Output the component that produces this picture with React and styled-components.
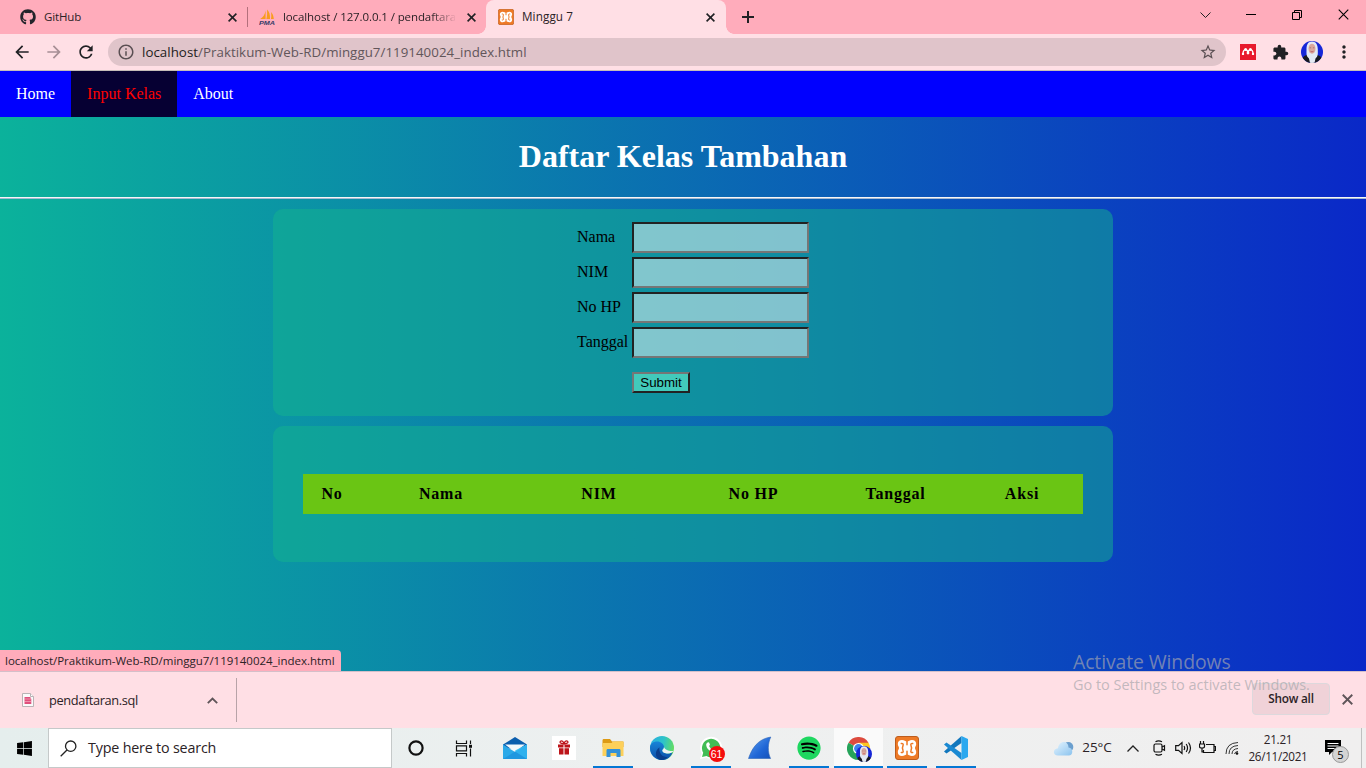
import React from "react";
import styled, { createGlobalStyle, css } from "styled-components";
import { FaGithub, FaWindows, FaSpotify } from "react-icons/fa";
import { MdArrowBack, MdArrowForward, MdRefresh, MdInfoOutline, MdStarBorder, MdExtension, MdMoreVert } from "react-icons/md";

const Global = createGlobalStyle`
  *, *::before, *::after { box-sizing: border-box; }
  html, body { margin: 0; padding: 0; overflow: hidden; }
  svg { display: block; flex: none; }
`;

const uiFont = `"Open Sans", "Noto Sans", sans-serif`;
const serif = `"Liberation Serif", "Times New Roman", serif`;

const Screen = styled.div`
  position: relative;
  width: 1366px;
  height: 768px;
  display: flex;
  flex-direction: column;
  overflow: hidden;
  font-family: ${uiFont};
`;

const UiText = styled.span`
  font-size: ${(p) => p.$size || 12}px;
  letter-spacing: ${(p) => p.$track || 0}px;
  color: ${(p) => p.$color || "#2b2226"};
  white-space: nowrap;
  line-height: 1.3;
`;

/* ---- browser chrome ---- */
const TabStrip = styled.div`
  flex: none;
  height: 34px;
  display: flex;
  background: #ffacbb;
`;

const Tab = styled.div`
  position: relative;
  width: ${(p) => p.$width}px;
  height: 34px;
  padding: 0 ${(p) => p.$right}px 0 ${(p) => p.$left}px;
  display: flex;
  align-items: center;
  gap: 8px;
  ${(p) =>
    p.$active &&
    css`
      background: #ffdfe5;
      border-radius: 8px 8px 0 0;
      &::before,
      &::after {
        content: "";
        position: absolute;
        bottom: 0;
        width: 8px;
        height: 8px;
      }
      &::before {
        left: -8px;
        background: radial-gradient(circle at 0 0, transparent 7.5px, #ffdfe5 8px);
      }
      &::after {
        right: -8px;
        background: radial-gradient(circle at 100% 0, transparent 7.5px, #ffdfe5 8px);
      }
    `}
`;

const TabTitle = styled(UiText)`
  flex: 1;
  min-width: 0;
  ${(p) => p.$fade && css`
    mask-image: linear-gradient(to right, #000 calc(100% - 24px), transparent calc(100% + 2px));
  `}
`;

const TabDivider = styled.div`
  width: 1px;
  height: 20px;
  margin-top: 7px;
  background: #b3707c;
`;

const NewTab = styled.div`
  height: 34px;
  padding-left: 14px;
  display: flex;
  align-items: center;
`;

const WindowControls = styled.div`
  margin-left: auto;
  display: flex;
  height: 29px;
`;

const WindowButton = styled.div`
  width: 46px;
  display: flex;
  align-items: center;
  justify-content: center;
`;

const Toolbar = styled.div`
  flex: none;
  height: 37px;
  display: flex;
  align-items: center;
  background: #ffdfe5;
  border-bottom: 1px solid #c5bcb9;
`;

const ToolButton = styled.div`
  width: 32px;
  height: 32px;
  display: flex;
  align-items: center;
  justify-content: center;
  color: ${(p) => p.$color || "#202124"};
`;

const NavButtons = styled.div`
  width: 108px;
  padding-left: 6px;
  display: flex;
`;

const Omnibox = styled.div`
  width: 1118px;
  height: 28px;
  padding: 0 9px 0 9px;
  display: flex;
  align-items: center;
  border-radius: 14px;
  background: #e0c4ca;
  color: #5a4f53;
`;

const Url = styled(UiText)`
  flex: 1;
  margin-left: 7px;
  padding-top: 1px;
  b {
    font-weight: 400;
    color: #231d20;
  }
`;

const Extensions = styled.div`
  display: flex;
  margin-left: 6px;
`;

/* ---- web page ---- */
const Page = styled.main`
  position: relative;
  flex: none;
  height: 600px;
  font-family: ${serif};
  font-size: 16px;
  color: #000;
  background: linear-gradient(to right, #0bb29b, #0a28c8);
`;

const Nav = styled.nav`
  height: 46px;
  display: flex;
  background: #0000ff;
`;

const NavLink = styled.a`
  height: 46px;
  padding: 0 16px;
  line-height: 46px;
  color: ${(p) => (p.$hover ? "#f00" : "#fff")};
  background: ${(p) => (p.$hover ? "#060033" : "transparent")};
`;

const Heading = styled.h1`
  margin: 0;
  height: 80px;
  line-height: 79px;
  text-align: center;
  font-size: 32px;
  color: #fff;
`;

const Rule = styled.div`
  height: 2px;
  background: linear-gradient(#f6f6f6 50%, #a5b9d2 50%);
`;

const Card = styled.section`
  width: 840px;
  height: ${(p) => p.$height}px;
  margin: 10px 0 0 273px;
  padding: ${(p) => p.$pad};
  border-radius: 10px;
  background: rgba(20, 180, 141, 0.5);
`;

const Form = styled.div`
  display: grid;
  grid-template-columns: 53px 177px;
  column-gap: 2px;
  row-gap: 4px;
`;

const Label = styled.label`
  line-height: 29px;
`;

const Field = styled.input`
  width: 177px;
  height: 31px;
  margin: 0;
  padding: 1px 2px;
  border: 2px solid;
  border-color: #222 #767676 #767676 #222;
  background: rgba(255, 255, 255, 0.48);
  background-clip: padding-box;
`;

const Submit = styled.button`
  grid-column: 2;
  justify-self: start;
  width: 58px;
  height: 21px;
  margin-top: 10px;
  padding: 0;
  border: 2px solid;
  border-color: #767676 #222 #222 #767676;
  background: #42cabb;
  color: #000;
  font: 13.333px/16px "Liberation Sans", Arial, sans-serif;
`;

const Table = styled.table`
  width: 780px;
  table-layout: fixed;
  border-collapse: collapse;
  background: #6ac514;
`;

const HeadCell = styled.th`
  width: ${(p) => p.$width}px;
  height: 40px;
  padding: 0;
  letter-spacing: 0.8px;
  font-size: 16px;
`;

const StatusBubble = styled.div`
  position: absolute;
  left: 0;
  bottom: 0;
  width: 341px;
  height: 21px;
  padding: 2px 0 0 5px;
  display: flex;
  align-items: center;
  background: #ffacbb;
  border-radius: 0 4px 0 0;
  font-family: ${uiFont};
`;

/* ---- downloads ---- */
const Shelf = styled.div`
  flex: none;
  height: 57px;
  display: flex;
  align-items: center;
  background: #ffdfe5;
  border-top: 1px solid #d4bfc9;
`;

const Download = styled.div`
  width: 237px;
  height: 44px;
  padding: 0 18px 0 22px;
  display: flex;
  align-items: center;
  border-right: 1px solid #b8a3a8;
`;

const FileName = styled(UiText)`
  flex: 1;
  margin-left: 15px;
`;

const ShowAll = styled.div`
  width: 78px;
  height: 32px;
  margin: 0 12px 3px auto;
  display: flex;
  align-items: center;
  justify-content: center;
  border: 1px solid #ddd8dc;
  border-radius: 4px;
  background: #f0d2d8;
  font-weight: 600;
`;

const ShelfClose = styled.div`
  width: 24px;
  margin-bottom: 2px;
`;

const Watermark = styled.div`
  position: absolute;
  left: 1073px;
  top: 649px;
  display: flex;
  flex-direction: column;
  gap: 2px;
`;

/* ---- taskbar ---- */
const Taskbar = styled.footer`
  flex: none;
  height: 40px;
  display: flex;
  background: linear-gradient(to right, #e5eeed, #eef0f0 50%, #f0efef);
`;

const Start = styled.div`
  width: 48px;
  display: flex;
  align-items: center;
  justify-content: center;
`;

const Search = styled.div`
  width: 344px;
  height: 40px;
  padding-left: 11px;
  display: flex;
  align-items: center;
  gap: 11px;
  background: #fff;
  border: 1px solid #c5c9c9;
`;

const AppButton = styled.div`
  position: relative;
  width: ${(p) => p.$width || 49}px;
  height: 40px;
  display: flex;
  align-items: center;
  justify-content: center;
  background: ${(p) => (p.$active ? "#fafafa" : "transparent")};
  &::after {
    content: "";
    display: ${(p) => (p.$open ? "block" : "none")};
    position: absolute;
    bottom: 0;
    left: ${(p) => (p.$active ? 0 : 4.5)}px;
    right: ${(p) => (p.$active ? 0 : 4.5)}px;
    height: 2px;
    background: #0477d4;
  }
`;

const Apps = styled.div`
  display: flex;
  margin-left: 2.5px;
`;

const Tray = styled.div`
  margin-left: auto;
  display: flex;
  align-items: center;
`;

const TrayItem = styled.div`
  width: ${(p) => p.$width}px;
  display: flex;
  align-items: center;
  justify-content: center;
`;

const Clock = styled.div`
  width: 66px;
  display: flex;
  flex-direction: column;
  align-items: center;
  gap: 2px;
`;

const Edge = styled.div`
  width: 5px;
  height: 40px;
  border-left: 1px solid #bfc0c0;
`;

/* ---- drawings ---- */
const Cross = ({ size = 9, color = "#202124", width = 1.6 }) => (
  <svg width={size} height={size} viewBox="0 0 9 9" stroke={color} strokeWidth={width}>
    <path d="M.6.6l7.8 7.8M8.400.6L.6 8.400" />
  </svg>
);

const TabClose = styled.div`
  width: 16px;
  height: 16px;
  display: flex;
  align-items: center;
  justify-content: center;
`;

const SpotifyIcon = styled(FaSpotify)`
  color: #1ed760;
  background: radial-gradient(#000 60%, transparent 62%);
`;

const Xampp = ({ size }) => (
  <svg width={size} height={size} viewBox="0 0 24 24">
    <rect x=".5" y=".5" width="23" height="23" rx="2.500" fill="#ee7a26" stroke="#bd5c1c" />
    <path
      d="M7 4C9.500 4 10.300 5.500 12 5.500S14.500 4 17 4c2.500 0 4.200 1.600 4.200 4 0 1.800-1.200 2.700-1.200 4s1.200 2.200 1.200 4c0 2.400-1.700 4-4.200 4s-3.300-1.500-5-1.500S9.500 20 7 20c-2.500 0-4.200-1.600-4.200-4 0-1.800 1.200-2.700 1.200-4S2.800 9.800 2.800 8C2.800 5.600 4.500 4 7 4z"
      fill="#fff"
    />
    <path
      d="M12 5v3.700M12 19v-3.700M6.300 7.500c1.300-.4 2.200.4 1.800 1.600L7.400 12l.7 2.900c.4 1.200-.5 2-1.800 1.600M17.700 7.500c-1.300-.4-2.200.4-1.800 1.600l.7 2.900-.7 2.900c-.4 1.200.5 2 1.800 1.600"
      fill="none" stroke="#ee7a26" strokeWidth="1.500" strokeLinecap="round"
    />
  </svg>
);

const PmaIcon = () => (
  <svg width="16" height="16" viewBox="0 0 16 16">
    <path d="M6.600 1.500v8.500H1.200C4 8.500 6 5.500 6.600 1.500zM8 .5c2.200 2 3.200 5 3 9.500H7.400C8.200 7 8.300 4 8 .5zM12 3c1.800 1.800 2.600 4 2.800 7H12c.4-2.500.4-4.500 0-7z" fill="#f89c1c" />
    <text x="0" y="15.700" textLength="16" lengthAdjust="spacingAndGlyphs" fontFamily="Liberation Sans, sans-serif" fontWeight="700" fontStyle="italic" fontSize="6.200" fill="#353b68">PMA</text>
  </svg>
);

const Avatar = ({ size }) => (
  <svg width={size} height={size} viewBox="0 0 22 22">
    <clipPath id={`face${size}`}><circle cx="11" cy="11" r="11" /></clipPath>
    <g clipPath={`url(#face${size})`}>
      <rect width="22" height="22" fill="#1626d8" />
      <path d="M0 22c.3-5 2.500-7 5.500-8h11c3 1 5.500 3 6 8z" fill="#171821" />
      <path d="M11 .5c-4.800 0-5.500 4.500-5.500 8 0 4.500-.5 6.500 2.500 9L9 22h4.500l1-4.500c2.800-2.500 2.300-4.500 2.300-9C16.800 5 15.800.5 11 .5z" fill="#e3e8f3" />
      <ellipse cx="11" cy="7.800" rx="3.500" ry="5" fill="#dba79c" />
      <path d="M8.600 6.800h1.500M11.900 6.800h1.500" stroke="#8b626a" strokeWidth=".7" />
      <path d="M9.500 10.300q1.500 1.200 3 0" stroke="#b8515c" strokeWidth=".8" fill="none" />
    </g>
  </svg>
);

const Mendeley = () => (
  <svg width="16" height="16" viewBox="0 0 16 16">
    <rect width="16" height="16" fill="#e8192c" />
    <path d="M3 10C3 7 4 5.800 5.500 5.600 7.300 5.800 8 7 8 9.500 8 7 8.700 5.800 10.500 5.600 12 5.800 13 7 13 10" fill="none" stroke="#fff" strokeWidth="1.400" />
    <circle cx="5.600" cy="5.500" r="1.500" fill="#fff" />
    <circle cx="10.400" cy="5.500" r="1.500" fill="#fff" />
    <circle cx="3" cy="9.900" r="1.200" fill="#fff" />
    <circle cx="8" cy="9" r="1.400" fill="#fff" />
    <circle cx="13" cy="9.900" r="1.200" fill="#fff" />
  </svg>
);

const SqlFile = () => (
  <svg width="12" height="14" viewBox="0 0 12 14">
    <path d="M.5.5h8l3 3v10H.5z" fill="#fafafa" stroke="#b9b3b5" />
    <path d="M8.500.5v3h3" fill="#fff" stroke="#b9b3b5" />
    <path d="M2.500 4h6v1.300l.8.7v5h-6.800z" fill="#e0507c" />
    <path d="M2 6h7.500M2 8.500h7.500" stroke="#f6bccb" strokeWidth=".6" />
  </svg>
);

const TaskView = () => (
  <svg width="18" height="17" viewBox="0 0 18 17" fill="none" stroke="#111" strokeWidth="1.200">
    <path d="M1.500.5v3h10v-3M1.500 16.500v-3h10v3M1.500 5.800h10v5h-10zM15.500.5v3.500M15.500 8.500v8" />
    <path d="M14 4.800h3v3h-3z" fill="#111" stroke="none" />
  </svg>
);

const Mail = () => (
  <svg width="24" height="24" viewBox="0 0 24 24">
    <path d="M0 8.500L12 1l12 7.500v4H0z" fill="#0b5eae" />
    <path d="M2 8.500h20L12 16z" fill="#f4f8fb" />
    <path d="M0 8.500l12 7.500L24 8.500V23H0z" fill="#2ba9e8" />
    <path d="M12 14.500L24 8.500V23z" fill="#45c4f4" />
    <path d="M0 23L24 8.500V23z" fill="#2fb1ee" />
    <path d="M12 15.500L24 23H0z" fill="#1f97e0" />
  </svg>
);

const Gift = () => (
  <svg width="24" height="24" viewBox="0 0 24 24">
    <path fill="#fff" d="M0 0h24v24H0z" />
    <path d="M6 8.500h5.500v3H6zM12.500 8.500H18v3h-5.500zM7 12.300h4.500v6.200H7zM12.500 12.300H17v6.200h-4.500z" fill="#bd1419" />
    <path d="M12 8C9 8 7.200 6.500 8.500 5.300S11.500 5.500 12 8c.5-2.500 2.200-3.900 3.500-2.700S15 8 12 8z" fill="none" stroke="#bd1419" strokeWidth="1.300" />
  </svg>
);

const Explorer = () => (
  <svg width="22" height="20" viewBox="0 0 22 20">
    <path d="M.5 2.500C.5 1.500 1 1 2 1h6l2 2.500h10.500c1 0 1 .5 1 1V9H.5z" fill="#dd9a14" />
    <path d="M.5 5h9l1.500-1.500h10.500V18H.5z" fill="#fdd05a" />
    <path d="M4.500 19v-6.500c0-1 .5-1.500 1.500-1.500h11c1 0 1.500.5 1.500 1.500V19h-4v-4h-6v4z" fill="#3391d8" />
  </svg>
);

const EdgeLogo = () => (
  <svg width="24" height="24" viewBox="0 0 24 24">
    <defs>
      <linearGradient id="edgeTop" x1="0" y1=".2" x2="1" y2=".4"><stop stopColor="#2aaee0" /><stop offset=".55" stopColor="#2dc3c9" /><stop offset="1" stopColor="#63dd63" /></linearGradient>
      <linearGradient id="edgeLow" x1="0" y1="0" x2="0" y2="1"><stop stopColor="#1784d8" /><stop offset="1" stopColor="#0d4fa8" /></linearGradient>
    </defs>
    <circle cx="12" cy="12" r="12" fill="url(#edgeTop)" />
    <path d="M0 12c0-4.500 3.500-6.500 7-6.500 4 0 7 2.500 7 5.500 0 2-1.700 2.500-1.700 3.500 0 1.700 2.700 3 5.700 3 2 0 3.500-.7 4.500-1.300C21 21 17 24 12 24 5.400 24 0 18.600 0 12z" fill="url(#edgeLow)" />
    <path d="M9 23.600C5 21 4.500 15 9.500 11.300c-1 6 3 10.200 8 10C14.500 23.800 12 24.300 9 23.600z" fill="#0a3e8c" />
    <path d="M14 11c0 2-1.700 2.500-1.700 3.500 0 1.700 2.700 3 5.700 3 2.600 0 4.500-1.200 5.500-2.500l.5-.3C21 15.500 15 14.500 14 11z" fill="#f0f2f2" />
  </svg>
);

const WhatsApp = () => (
  <svg width="24" height="24" viewBox="0 0 24 24">
    <path d="M1 23l1.600-5.800A11 11 0 1 1 7 21.500z" fill="#fff" />
    <path d="M3 21l1.200-4.300A9.200 9.200 0 1 1 7.500 20z" fill="#42bd55" />
    <path d="M8.600 6.500c.7-.5 1.300-.4 1.600.3l.8 1.900-.9 1.300c.8 1.700 2 2.900 3.800 3.700l1.300-1.300 2.200 1.100c.7 1.300-1 2.900-2.600 2.800-3.500-.4-7.600-4-7.600-7.600 0-1 .6-1.700 1.400-2.200z" fill="#fff" />
  </svg>
);

const CountBadge = styled.span`
  position: absolute;
  left: 22px;
  top: 18px;
  width: 16px;
  height: 16px;
  border-radius: 50%;
  background: #f50d0d;
  color: #fff;
  font: 10.5px/16px "Liberation Sans", sans-serif;
  text-align: center;
`;

const Wireshark = () => (
  <svg width="24" height="24" viewBox="0 0 24 24">
    <defs><linearGradient id="fin" x1="0" y1="0" x2="1" y2="1"><stop stopColor="#5ea0ee" /><stop offset=".6" stopColor="#1f66d6" /><stop offset="1" stopColor="#1551b8" /></linearGradient></defs>
    <path d="M.5 22.500C4 12 10 3 22.800 1c-3 6-3.500 15-.2 21.500z" fill="url(#fin)" stroke="#2c65b8" strokeWidth=".6" />
  </svg>
);

const Chrome = () => (
  <svg width="23" height="23" viewBox="0 0 24 24">
    <path d="M12 12L1.600 6A12 12 0 0 1 22.400 6z" fill="#dd4b3e" />
    <path d="M12 12L1.600 6A12 12 0 0 0 12 24z" fill="#26a35a" />
    <path d="M12 12V24A12 12 0 0 0 22.400 6H12z" fill="#fbc722" />
    <circle cx="12" cy="12" r="5.800" fill="#fff" />
    <circle cx="12" cy="12" r="4.600" fill="#3e82ee" />
  </svg>
);

const ProfileBadge = styled.span`
  position: absolute;
  left: 22px;
  top: 18px;
`;

const VsCode = () => (
  <svg width="24" height="24" viewBox="0 0 24 24">
    <path d="M17.500 0v7L2.500 17.500 0 15.500z" fill="#1177bd" />
    <path d="M0 8.500l2.500-2L17.500 17v7z" fill="#1a89d2" />
    <path d="M17.500 0L24 3v18l-6.500 3z" fill="#2aa8ef" />
  </svg>
);

const Cloud = () => (
  <svg width="21" height="17" viewBox="0 0 21 17">
    <defs><linearGradient id="cloud" x1="0" y1="0" x2="1" y2="1"><stop stopColor="#e6f5ff" /><stop offset="1" stopColor="#8bc3ee" /></linearGradient></defs>
    <circle cx="15.300" cy="7" r="5" fill="#6b9fce" />
    <path d="M5 15.500c-5.500 0-5.500-7 0-7.300C6 0 15.500.2 15.500 7.500c5 .2 5 8 .2 8z" fill="url(#cloud)" />
  </svg>
);

const line = { fill: "none", stroke: "#111", strokeWidth: 1.2 };

const Camera = () => (
  <svg width="14" height="16" viewBox="0 0 14 16" {...line}>
    <rect x="2" y="4" width="8" height="8" rx="1.500" />
    <path d="M10 7l2.500-1.300v4.600L10 9M3.500 1.800q3-1.700 6.500 0M3.500 14.200q3 1.700 6.500 0" />
  </svg>
);

const Volume = () => (
  <svg width="17" height="14" viewBox="0 0 17 14" {...line}>
    <path d="M.7 4.700h2.800L7 1.500v11L3.500 9.300H.7zM9 5q1.300 2 0 4M11.200 3q2.700 4 0 8M13.500 1.500q4 5.500 0 11" />
  </svg>
);

const Battery = () => (
  <svg width="17" height="14" viewBox="0 0 17 14" {...line}>
    <path d="M7 3.500h8v8H4.500V9M15 5.500h1.500v4H15M1.500 0v3M4.500 0v3M.5 3h5v2.500Q5.500 7 3 7 .5 7 .5 5.500zM3 7v4h2" />
  </svg>
);

const Wifi = () => (
  <svg width="14" height="14" viewBox="0 0 14 14" fill="none" stroke="#333" strokeWidth="1">
    <path d="M1 13Q1 2 13 1.500M4 13Q4 5 13 4.500M7 13Q7 8 13 7.500M9.500 13Q10 10.500 13 10.500" />
    <circle cx="12" cy="12.500" r="1.300" fill="#111" stroke="none" />
  </svg>
);

const Notice = styled.div`
  position: relative;
  width: 50px;
  height: 40px;
  padding: 12px 0 0 14px;
`;

const NoticeCount = styled.span`
  position: absolute;
  left: 21px;
  top: 18px;
  width: 17px;
  height: 17px;
  border: 1px solid #999;
  border-radius: 50%;
  background: #d4d4d4;
  font-size: 11px;
  line-height: 15px;
  text-align: center;
`;

const columns = [["No", 58], ["Nama", 160], ["NIM", 156], ["No HP", 153], ["Tanggal", 131], ["Aksi", 122]];

export default function App() {
  return (
    <Screen>
      <Global />
      <TabStrip>
        <Tab $width={247} $left={20} $right={7}>
          <FaGithub size={16} color="#24242b" />
          <TabTitle $size={11.5} $track={-0.15}>GitHub</TabTitle>
          <TabClose><Cross /></TabClose>
        </Tab>
        <TabDivider />
        <Tab $width={238} $left={11} $right={7}>
          <PmaIcon />
          <TabTitle $size={11.5} $track={-0.1} $fade>localhost / 127.0.0.1 / pendaftara</TabTitle>
          <TabClose><Cross /></TabClose>
        </Tab>
        <Tab $width={240} $left={12} $right={8} $active>
          <Xampp size={16} />
          <TabTitle $size={11.7} $track={0.1}>Minggu 7</TabTitle>
          <TabClose><Cross /></TabClose>
        </Tab>
        <NewTab>
          <svg width="16" height="16" viewBox="0 0 16 16" stroke="#202124" strokeWidth="2"><path d="M8 2v12M2 8h12" /></svg>
        </NewTab>
        <WindowControls>
          <WindowButton><svg width="11" height="6" viewBox="0 0 11 6" fill="none" stroke="#222"><path d="M.5.5l5 5 5-5" /></svg></WindowButton>
          <WindowButton><svg width="10" height="1" viewBox="0 0 10 1"><path d="M0 0h10v1H0z" /></svg></WindowButton>
          <WindowButton><svg width="10" height="10" viewBox="0 0 10 10" fill="none" stroke="#000"><path d="M.5 2.500h7v7h-7zM2.500 2.500v-2h7v7h-2" /></svg></WindowButton>
          <WindowButton><Cross size={11} width={0.9} color="#000" /></WindowButton>
        </WindowControls>
      </TabStrip>

      <Toolbar>
        <NavButtons>
          <ToolButton><MdArrowBack size={20} /></ToolButton>
          <ToolButton $color="#a78f95"><MdArrowForward size={20} /></ToolButton>
          <ToolButton><MdRefresh size={20} /></ToolButton>
        </NavButtons>
        <Omnibox>
          <MdInfoOutline size={18} />
          <Url $size={13.3} $track={0.04} $color="#62565a"><b>localhost</b>/Praktikum-Web-RD/minggu7/119140024_index.html</Url>
          <MdStarBorder size={18} />
        </Omnibox>
        <Extensions>
          <ToolButton><Mendeley /></ToolButton>
          <ToolButton><MdExtension size={17} /></ToolButton>
          <ToolButton><Avatar size={22} /></ToolButton>
          <ToolButton><MdMoreVert size={20} /></ToolButton>
        </Extensions>
      </Toolbar>

      <Page>
        <Nav>
          <NavLink>Home</NavLink>
          <NavLink $hover>Input Kelas</NavLink>
          <NavLink>About</NavLink>
        </Nav>
        <Heading>Daftar Kelas Tambahan</Heading>
        <Rule />
        <Card $height={207} $pad="13px 0 0 304px">
          <Form>
            {["Nama", "NIM", "No HP", "Tanggal"].map((name) => (
              <React.Fragment key={name}>
                <Label>{name}</Label>
                <Field />
              </React.Fragment>
            ))}
            <Submit>Submit</Submit>
          </Form>
        </Card>
        <Card $height={136} $pad="48px 30px 0">
          <Table>
            <thead>
              <tr>
                {columns.map(([name, width]) => (
                  <HeadCell key={name} $width={width}>{name}</HeadCell>
                ))}
              </tr>
            </thead>
          </Table>
        </Card>
        <StatusBubble>
          <UiText $size={11.5} $track={-0.02}>localhost/Praktikum-Web-RD/minggu7/119140024_index.html</UiText>
        </StatusBubble>
      </Page>

      <Shelf>
        <Download>
          <SqlFile />
          <FileName $size={12.8} $track={-0.38}>pendaftaran.sql</FileName>
          <svg width="11" height="7" viewBox="0 0 11 7" fill="none" stroke="#5f5559" strokeWidth="1.800"><path d="M.8 6.200l4.700-4.700 4.700 4.700" /></svg>
        </Download>
        <ShowAll><UiText $size={11.8} $track={-0.22}>Show all</UiText></ShowAll>
        <ShelfClose><Cross size={11} color="#5f5559" width={1.5} /></ShelfClose>
      </Shelf>

      <Taskbar>
        <Start><FaWindows size={17} color="#000" /></Start>
        <Search>
          <svg width="17" height="17" viewBox="0 0 17 17" fill="none" stroke="#222" strokeWidth="1.300"><circle cx="10.700" cy="6.200" r="5.200" /><path d="M7 10L.7 16.300" /></svg>
          <UiText $size={14.3} $track={-0.18}>Type here to search</UiText>
        </Search>
        <AppButton $width={48}><svg width="16" height="16" viewBox="0 0 16 16"><circle cx="8" cy="8" r="6.600" fill="none" stroke="#111" strokeWidth="2.200" /></svg></AppButton>
        <AppButton $width={48}><TaskView /></AppButton>
        <Apps>
          <AppButton><Mail /></AppButton>
          <AppButton><Gift /></AppButton>
          <AppButton $open><Explorer /></AppButton>
          <AppButton><EdgeLogo /></AppButton>
          <AppButton $open><WhatsApp /><CountBadge>61</CountBadge></AppButton>
          <AppButton><Wireshark /></AppButton>
          <AppButton $open><SpotifyIcon size={24} /></AppButton>
          <AppButton $open $active><Chrome /><ProfileBadge><Avatar size={16} /></ProfileBadge></AppButton>
          <AppButton $open><Xampp size={24} /></AppButton>
          <AppButton $open><VsCode /></AppButton>
        </Apps>
        <Tray>
          <TrayItem $width={23}><Cloud /></TrayItem>
          <TrayItem $width={44}><UiText $size={13.5} $track={-0.1}>25°C</UiText></TrayItem>
          <TrayItem $width={28}><svg width="12" height="7" viewBox="0 0 12 7" fill="none" stroke="#222" strokeWidth="1.300"><path d="M.5 6.500L6 1l5.500 5.500" /></svg></TrayItem>
          <TrayItem $width={24}><Camera /></TrayItem>
          <TrayItem $width={24}><Volume /></TrayItem>
          <TrayItem $width={24}><Battery /></TrayItem>
          <TrayItem $width={26}><Wifi /></TrayItem>
          <Clock>
            <UiText $size={11.7} $track={-0.3}>21.21</UiText>
            <UiText $size={11.7} $track={-0.3}>26/11/2021</UiText>
          </Clock>
          <Notice>
            <svg width="16" height="16" viewBox="0 0 16 16"><path d="M0 0h16v12H7l-3 3v-3H0z" /><path d="M2.500 3.500h11M2.500 6h11M2.500 8.500h7" stroke="#fff" /></svg>
            <NoticeCount>5</NoticeCount>
          </Notice>
          <Edge />
        </Tray>
      </Taskbar>
      <Watermark>
        <UiText $size={19.4} $track={-0.1} $color="rgba(165,165,175,.68)">Activate Windows</UiText>
        <UiText $size={14.5} $track={-0.02} $color="rgba(165,165,170,.68)">Go to Settings to activate Windows.</UiText>
      </Watermark>
    </Screen>
  );
}
